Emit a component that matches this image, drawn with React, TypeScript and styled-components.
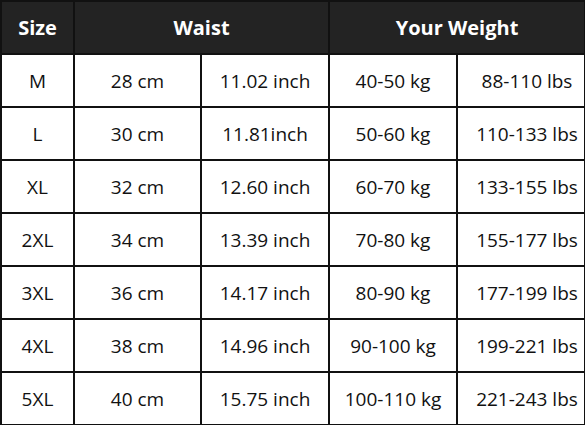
import styled, { createGlobalStyle } from 'styled-components';

const widths = [73, 127, 128, 128, 128];

const rows = [
  ['M', '28 cm', '11.02 inch', '40-50 kg', '88-110 lbs'],
  ['L', '30 cm', '11.81inch', '50-60 kg', '110-133 lbs'],
  ['XL', '32 cm', '12.60 inch', '60-70 kg', '133-155 lbs'],
  ['2XL', '34 cm', '13.39 inch', '70-80 kg', '155-177 lbs'],
  ['3XL', '36 cm', '14.17 inch', '80-90 kg', '177-199 lbs'],
  ['4XL', '38 cm', '14.96 inch', '90-100 kg', '199-221 lbs'],
  ['5XL', '40 cm', '15.75 inch', '100-110 kg', '221-243 lbs'],
];

const GlobalStyle = createGlobalStyle`
  html, body {
    margin: 0;
    padding: 0;
    background: #ffffff;
  }
`;

const Table = styled.table`
  width: 584px;
  border-collapse: collapse;
  table-layout: fixed;
  font-family: 'Open Sans', 'Noto Sans', sans-serif;
`;

const Col = styled.col<{ $w: number }>`
  width: ${(p) => p.$w}px;
`;

const HeadCell = styled.th`
  height: 51px;
  padding: 0;
  background: #232323;
  color: #ffffff;
  font-size: 20px;
  font-weight: 700;
  text-align: center;
  border: 2px solid #111111;
`;

const Cell = styled.td<{ $shift?: number }>`
  height: 51px;
  padding: 0 0 0 ${(p) => p.$shift ?? 0}px;
  color: #111111;
  font-size: 19px;
  text-align: center;
  border: 2px solid #111111;
`;

export default function App() {
  return (
    <>
      <GlobalStyle />
      <Table>
        <colgroup>
          {widths.map((w, i) => (
            <Col key={i} $w={w} />
          ))}
        </colgroup>
        <thead>
          <tr>
            <HeadCell>Size</HeadCell>
            <HeadCell colSpan={2}>Waist</HeadCell>
            <HeadCell colSpan={2}>Your Weight</HeadCell>
          </tr>
        </thead>
        <tbody>
          {rows.map((r) => (
            <tr key={r[0]}>
              <Cell>{r[0]}</Cell>
              <Cell>{r[1]}</Cell>
              <Cell>{r[2]}</Cell>
              <Cell>{r[3]}</Cell>
              <Cell $shift={12}>{r[4]}</Cell>
            </tr>
          ))}
        </tbody>
      </Table>
    </>
  );
}
